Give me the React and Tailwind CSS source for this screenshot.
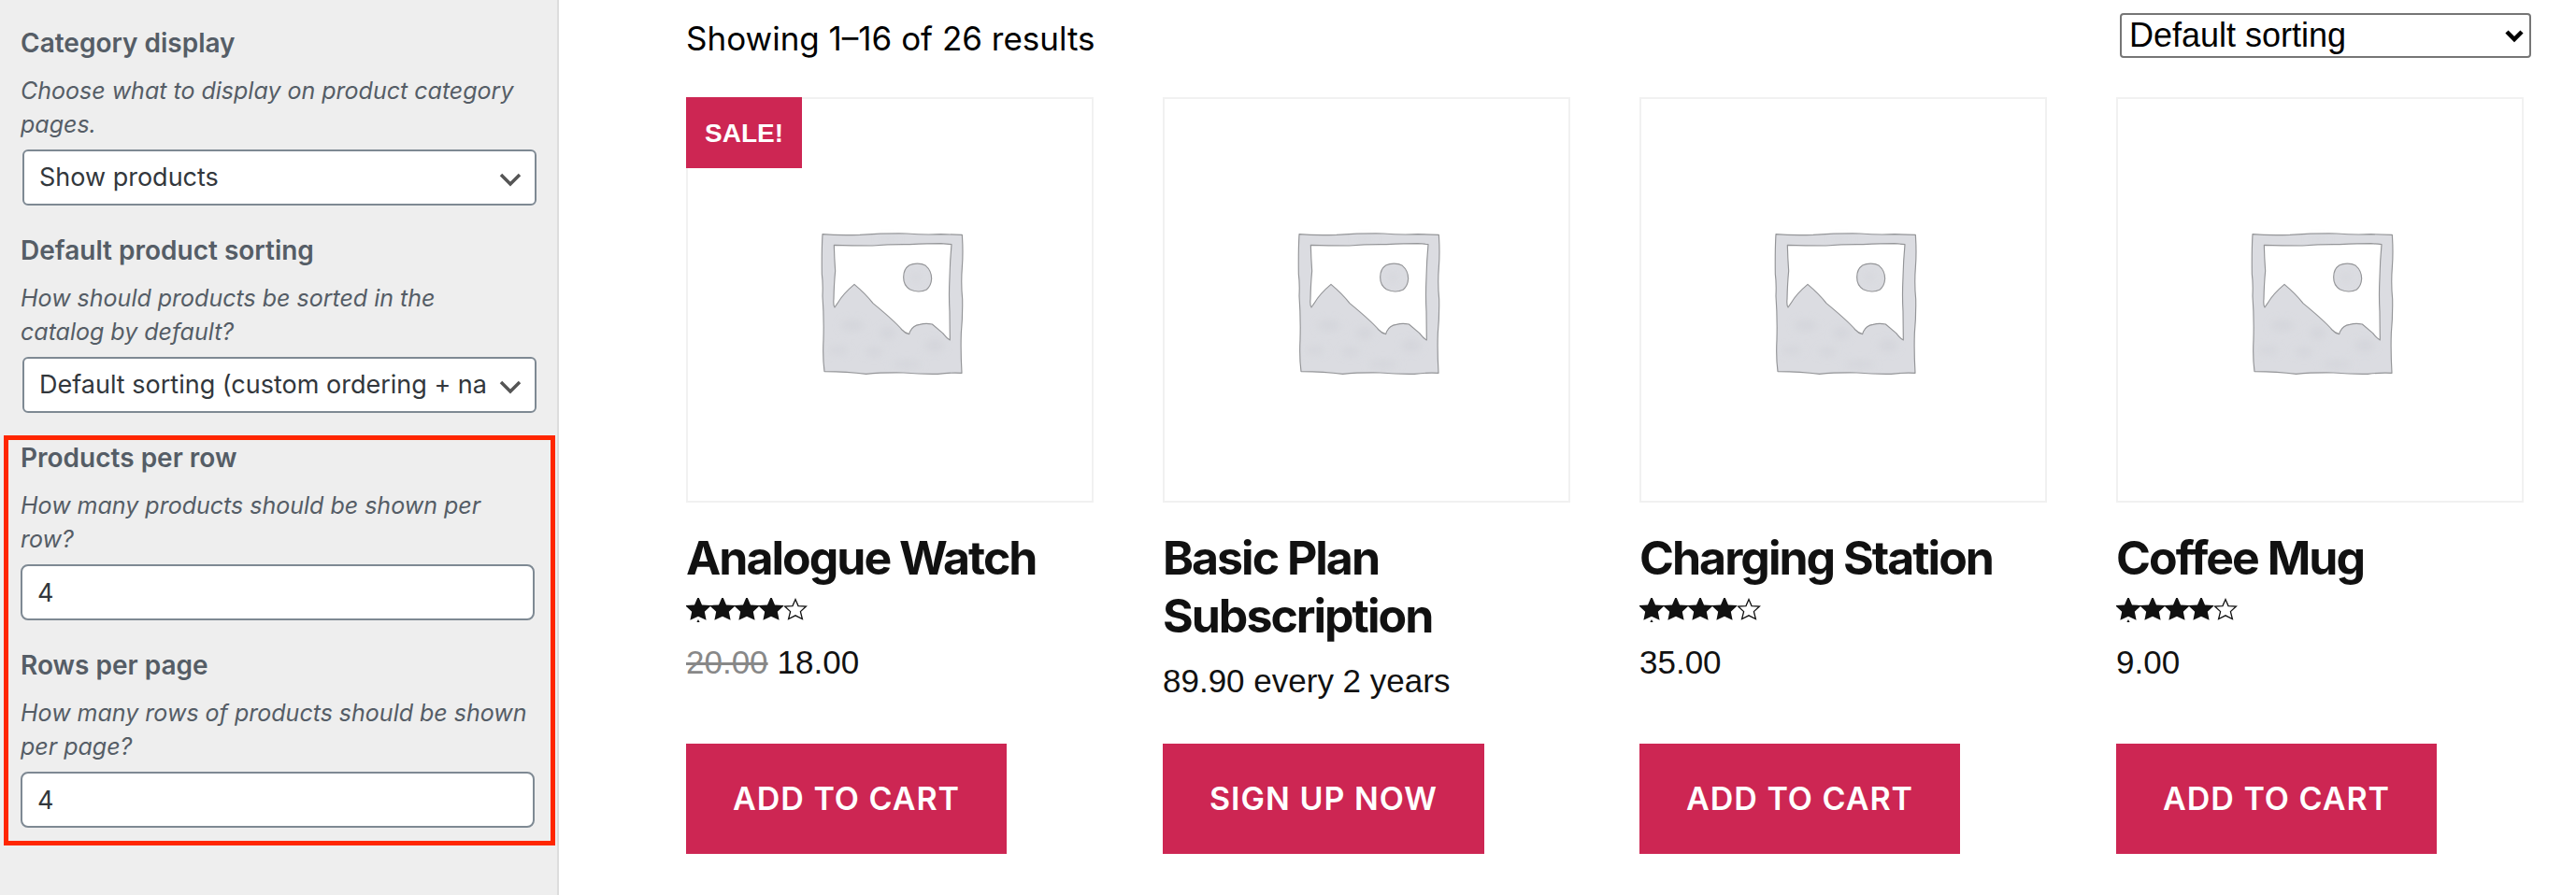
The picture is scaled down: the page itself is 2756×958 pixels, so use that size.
import React, { useState } from "react";

const products = [
  { id: 1, name: "Analogue Watch", rating: 4, oldPrice: "20.00", price: "18.00", action: "Add to cart", sale: true },
  { id: 2, name: "Basic Plan Subscription", price: "89.90 every 2 years", action: "Sign up now" },
  { id: 3, name: "Charging Station", rating: 4, price: "35.00", action: "Add to cart" },
  { id: 4, name: "Coffee Mug", rating: 4, price: "9.00", action: "Add to cart" },
];

const STAR = "M12.2 0H13.8L17 7.4L26 8V9L19.8 14.8L21.6 23.8L13 19.8L4.4 23.8L6.2 14.8L0 9V8L9 7.4Z";
const STAR_OUTLINE = "M13 1.6L16 8.6L24.4 9L18.4 14.6L20.4 22.6L13 18.8L5.6 22.6L7.6 14.6L1.6 9L10 8.6Z";

function Field({ id, label, description, children }) {
  return (
    <div>
      <label htmlFor={id} className="block text-[28px] leading-[48px] font-semibold">
        {label}
      </label>
      <p id={`${id}-description`} className="my-[9px] text-[25px] leading-[36px] italic">
        {description}
      </p>
      {children}
    </div>
  );
}

function SelectField({ id, label, description, options }) {
  return (
    <Field id={id} label={label} description={description}>
      <div className="relative left-[2px]">
        <select
          id={id}
          aria-describedby={`${id}-description`}
          className="block h-[60px] w-full appearance-none rounded-md border-2 border-[#7e8993] bg-white pr-[50px] pl-4 text-[27px] text-[#32373c]"
        >
          {options.map((option) => (
            <option key={option}>{option}</option>
          ))}
        </select>
        <svg
          className="pointer-events-none absolute top-6 right-4 h-4 w-6"
          viewBox="0 0 24 16"
          fill="none"
          stroke="#555"
          strokeWidth="3.5"
        >
          <path d="M2 3L12 13L22 3" />
        </svg>
      </div>
    </Field>
  );
}

function NumberField({ id, label, description }) {
  const [value, setValue] = useState("4");

  return (
    <Field id={id} label={label} description={description}>
      <input
        id={id}
        type="text"
        inputMode="numeric"
        aria-describedby={`${id}-description`}
        value={value}
        onChange={(e) => setValue(e.target.value)}
        className="block h-[60px] w-full rounded-lg border-2 border-[#7e8993] bg-white px-4 text-[27px] text-[#32373c]"
      />
    </Field>
  );
}

function Placeholder() {
  return (
    <svg viewBox="6 6 1296 1290" className="block w-full" role="img" aria-label="Placeholder">
      <defs>
        <filter id="smudge" x="-50%" y="-50%" width="200%" height="200%">
          <feGaussianBlur stdDeviation="12" />
        </filter>
      </defs>
      <g transform="translate(378 378)" strokeLinejoin="round">
        <path
          fill="#dbdce1"
          fillRule="evenodd"
          stroke="#949598"
          strokeWidth="3.5"
          d="M60 62Q110 66 180 64Q260 59 330 60Q390 65 440 62L508 64Q512 120 508 170Q504 220 509 270Q510 330 505 380Q503 440 507 508Q470 506 430 511Q380 512 320 507Q250 506 200 511Q140 504 66 503Q60 460 63 400Q65 330 60 260Q62 220 58 190Q57 110 60 62Z
             M97 97Q150 99 220 99Q280 94 340 95Q400 92 440 92Q458 93 474 95Q469 150 468 200Q465 260 468 310L469 402Q458 396 446 380L412 351Q390 347 372 352Q350 355 341 374L338 383Q325 380 315 369Q290 340 222 284Q200 255 162 223Q125 254 108 284L99 297Q94 290 96 270Q97 220 101 180Q98 140 97 97Z"
        />
        <path
          fill="#dbdce1"
          stroke="#949598"
          strokeWidth="3.5"
          d="M320 200C320 182 326 170 338 162C352 155 376 154 391 163C404 174 410 188 410 205C409 222 404 232 394 240C378 248 356 247 340 239C326 230 320 218 320 200Z"
        />
        <g fill="#d0d2d8" opacity="0.6" filter="url(#smudge)">
          <ellipse cx="155" cy="355" rx="38" ry="18" />
          <ellipse cx="270" cy="380" rx="28" ry="20" />
          <ellipse cx="110" cy="435" rx="34" ry="12" />
          <ellipse cx="225" cy="440" rx="30" ry="14" />
          <ellipse cx="420" cy="420" rx="32" ry="20" />
          <ellipse cx="330" cy="480" rx="50" ry="12" />
          <ellipse cx="360" cy="200" rx="16" ry="12" />
          <ellipse cx="270" cy="78" rx="34" ry="4" />
        </g>
      </g>
    </svg>
  );
}

function StarRating({ rating }) {
  return (
    <svg
      viewBox="0 0 130 26"
      className="mb-4 block h-[26px] w-[130px]"
      role="img"
      aria-label={`Rated ${rating} out of 5`}
    >
      {[0, 1, 2, 3, 4].map((i) => (
        <g key={i} transform={`translate(${i * 26} 0)`}>
          {i < rating ? (
            <path d={STAR} fill="#111" />
          ) : (
            <path d={STAR_OUTLINE} fill="none" stroke="#111" strokeWidth="1.3" />
          )}
        </g>
      ))}
      <path d="M13 23L14.6 26H11.4Z" fill="#111" />
    </svg>
  );
}

function ProductCard({ product }) {
  return (
    <li className="flex flex-col items-start">
      <div className="relative w-full border-2 border-[#f1f1f1]">
        <Placeholder />
        {product.sale && (
          <span className="absolute -top-[2px] -left-[2px] bg-[#cd2653] px-5 pt-[17px] pb-[15px] font-['Liberation_Sans',sans-serif] text-[28px] leading-[44px] font-bold text-white uppercase">
            Sale!
          </span>
        )}
      </div>
      <h2 className="mt-7 mb-3 text-[50px] leading-[62px] font-bold tracking-[-2px]">{product.name}</h2>
      {product.rating && <StarRating rating={product.rating} />}
      <p className="mb-10 font-['Liberation_Sans',sans-serif] text-[35px] leading-[54px]">
        {product.oldPrice && <del className="mr-[10px] text-[#888]">{product.oldPrice}</del>}
        {product.price}
      </p>
      <button
        type="button"
        className="mt-auto bg-[#cd2653] px-[50px] py-8 text-[34px] leading-[54px] font-semibold tracking-[1px] text-white uppercase"
      >
        {product.action}
      </button>
    </li>
  );
}

export default function App() {
  return (
    <div className="flex min-h-screen bg-white font-['Inter',sans-serif]">
      <aside className="w-[598px] shrink-0 border-r-2 border-[#ddd] bg-[#eee] pt-[22px] pr-6 pl-[22px] text-[#555d66]">
        <form className="flex flex-col gap-6">
          <SelectField
            id="category-display"
            label="Category display"
            description="Choose what to display on product category pages."
            options={["Show products", "Show categories", "Show categories & products"]}
          />
          <SelectField
            id="default-sorting"
            label="Default product sorting"
            description={"How should products be sorted in the catalog\u00a0by default?"}
            options={["Default sorting (custom ordering + name)", "Popularity (sales)", "Average rating"]}
          />
          <div className="relative flex flex-col gap-6">
            <NumberField
              id="products-per-row"
              label="Products per row"
              description="How many products should be shown per row?"
            />
            <NumberField
              id="rows-per-page"
              label="Rows per page"
              description="How many rows of products should be shown per page?"
            />
            <div className="pointer-events-none absolute top-0 -right-[22px] -bottom-[19px] -left-[18px] border-5 border-[#ff2600]" />
          </div>
        </form>
      </aside>

      <main className="flex-1 pt-[14px] pr-12 pl-[136px] text-[#111]">
        <div className="flex items-start justify-between text-black">
          <p className="text-[35px] leading-[54px]">Showing 1–16 of 26 results</p>
          <div className="relative w-[440px] font-['Liberation_Sans',sans-serif] text-[36px]">
            <select
              aria-label="Shop order"
              className="block h-12 w-full appearance-none rounded-[4px] border-2 border-[#767676] bg-white pr-10 pl-2 leading-[44px]"
            >
              <option>Default sorting</option>
              <option>Sort by popularity</option>
              <option>Sort by latest</option>
            </select>
            <svg
              className="pointer-events-none absolute top-4 right-2 h-4 w-5"
              viewBox="0 0 20 16"
              fill="none"
              stroke="#000"
              strokeWidth="4.5"
            >
              <path d="M2 4L10 12L18 4" />
            </svg>
          </div>
        </div>
        <ul className="mt-9 grid grid-cols-4 gap-x-[74px] pr-2">
          {products.map((product) => (
            <ProductCard key={product.id} product={product} />
          ))}
        </ul>
      </main>
    </div>
  );
}
